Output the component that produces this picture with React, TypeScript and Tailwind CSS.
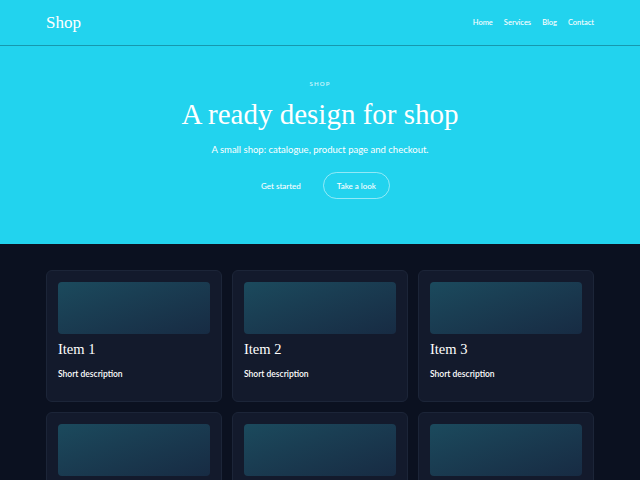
import React from 'react';

const NAV = ['Home', 'Services', 'Blog', 'Contact'];
const ITEMS = ['Item 1', 'Item 2', 'Item 3', 'Item 4', 'Item 5', 'Item 6'];

const serif = { fontFamily: '"Liberation Serif", "DejaVu Serif", serif' };

export default function App() {
  return (
    <div className="min-h-screen bg-[#0b1120] text-white" style={{ fontFamily: 'Lato, "Noto Sans", sans-serif' }}>
      {/* Header */}
      <header className="bg-[#22d3ee] h-[46px] border-b border-[#1798ae] px-[46px] flex items-center justify-between">
        <span className="text-[17px] leading-none" style={serif}>Shop</span>
        <nav className="flex items-center gap-[11px] text-[7.5px] font-medium">
          {NAV.map((n) => (
            <a key={n} href="#">{n}</a>
          ))}
        </nav>
      </header>

      {/* Hero */}
      <section className="bg-[#22d3ee] h-[198px] flex flex-col items-center pt-[34px]">
        <p className="text-[6px] tracking-[0.2em] leading-[8px] font-semibold text-white/80">SHOP</p>
        <h1 className="mt-[8px] text-[29px] leading-[36px]" style={serif}>A ready design for shop</h1>
        <p className="mt-[11px] text-[9.5px] leading-[14px]">A small shop: catalogue, product page and checkout.</p>
        <div className="mt-[15px] flex items-center gap-[21px] text-[8px] font-medium translate-x-[5px]">
          <button className="h-[27px] px-[1px]">Get started</button>
          <button className="h-[27px] px-[13px] rounded-full border border-white/50">Take a look</button>
        </div>
      </section>

      {/* Cards */}
      <main className="px-[46px] pt-[26px] pb-[26px] grid grid-cols-3 gap-x-[10px] gap-y-[10px]">
        {ITEMS.map((it) => (
          <div key={it} className="rounded-[6px] border border-[#1c2538] bg-[#131a2c] p-[11px] pb-[21px]">
            <div className="h-[52px] rounded-[4px] bg-gradient-to-br from-[#1b4a5d] to-[#172b43]" />
            <h3 className="mt-[5px] text-[14.5px] leading-[20px]" style={serif}>{it}</h3>
            <p className="mt-[9px] text-[8.5px] leading-[12px] font-semibold">Short description</p>
          </div>
        ))}
      </main>
    </div>
  );
}
